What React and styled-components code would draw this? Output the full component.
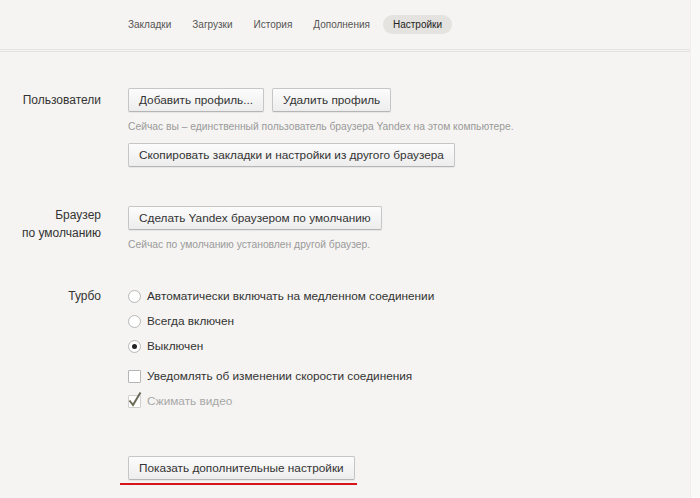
import styled, {createGlobalStyle} from "styled-components";

const GlobalStyle = createGlobalStyle`
    html, body {
        margin: 0;
        padding: 0;
        background: #f5f4f2;
    }
    body {
        font-family: "Liberation Sans", Arial, sans-serif;
        color: #333;
    }
`;

const Page = styled.div`
    display: flex;
    width: 700px;
    height: 498px;
    overflow: hidden;
`;

const Main = styled.div`
    width: 690px;
    display: flex;
    flex-direction: column;
`;

const Gutter = styled.div`
    flex: 1;
    background: #f9f9f8;
    border-left: 1px solid #efeeec;
`;

const Header = styled.nav`
    height: 49px;
    border-bottom: 3px double #e4e3e1;
    display: flex;
    align-items: center;
    padding-left: 120px;
`;

const Tab = styled.span`
    font-size: 10px;
    color: ${p => p.$active ? "#222" : "#555"};
    background: ${p => p.$active ? "#e4e3e0" : "transparent"};
    border-radius: 10px;
    padding: ${p => p.$active ? "4px 10px" : "4px 8px"};
    margin-right: ${p => p.$active ? 0 : "5px"};
`;

const Body = styled.div`
    padding-top: 36px;
    display: flex;
    flex-direction: column;
`;

const Section = styled.section`
    display: grid;
    grid-template-columns: 101px 1fr;
    column-gap: 27px;
    margin-bottom: ${p => p.$gap || 0}px;
`;

const Label = styled.div`
    text-align: right;
    font-size: 12px;
    line-height: 18px;
    color: #333;
    padding-top: ${p => p.$top || 0}px;
`;

const Content = styled.div`
    display: flex;
    flex-direction: column;
    align-items: flex-start;
`;

const ButtonRow = styled.div`
    display: flex;
    gap: 8px;
`;

const Button = styled.button`
    height: 24px;
    padding: 0 10px;
    font-family: "Liberation Sans", Arial, sans-serif;
    font-size: 11.8px;
    color: #333;
    background: linear-gradient(#fcfcfc, #ededed);
    border: 1px solid #c6c6c6;
    border-bottom-color: #b5b5b5;
    border-radius: 2px;
    box-shadow: 0 1px 1px rgba(0, 0, 0, 0.06);
    margin-top: ${p => p.$top || 0}px;
`;

const Hint = styled.div`
    font-size: 10.3px;
    color: #9a9a9a;
    margin-top: 8px;
    line-height: 13px;
`;

const Option = styled.label`
    display: flex;
    align-items: center;
    gap: 6px;
    height: 18px;
    font-size: 11.8px;
    color: ${p => p.$disabled ? "#a8a8a8" : "#333"};
    margin-top: ${p => p.$top || 0}px;
`;

const Radio = styled.span`
    width: 11px;
    height: 11px;
    border-radius: 50%;
    border: 1px solid #b9b9b9;
    background: radial-gradient(circle, #fff 60%, #f0f0f0);
    display: flex;
    align-items: center;
    justify-content: center;

    &::after {
        content: "";
        width: 5px;
        height: 5px;
        border-radius: 50%;
        background: ${p => p.$checked ? "#222" : "transparent"};
    }
`;

const Box = styled.span`
    position: relative;
    width: 11px;
    height: 11px;
    border: 1px solid ${p => p.$disabled ? "#cfcfcf" : "#b5b5b5"};
    border-radius: 1px;
    background: #fff;
`;

const Check = styled.svg`
    position: absolute;
    left: -1px;
    top: -5px;
`;

const Underlined = styled.div`
    display: flex;
    flex-direction: column;
    align-items: flex-start;
    margin-left: -8px;
    margin-top: 46px;
    padding: 0 2px 3px 8px;
    border-bottom: 2px solid #d8141b;
`;

export default function App() {
    const tabs = ["Закладки", "Загрузки", "История", "Дополнения", "Настройки"];

    return (
        <>
            <GlobalStyle/>
            <Page>
                <Main>
                    <Header>
                        {tabs.map(t => (
                            <Tab key={t} $active={t === "Настройки"}>{t}</Tab>
                        ))}
                    </Header>
                    <Body>
                        <Section $gap={39}>
                            <Label $top={3}>Пользователи</Label>
                            <Content>
                                <ButtonRow>
                                    <Button>Добавить профиль...</Button>
                                    <Button>Удалить профиль</Button>
                                </ButtonRow>
                                <Hint>Сейчас вы – единственный пользователь браузера Yandex на этом компьютере.</Hint>
                                <Button $top={10}>Скопировать закладки и настройки из другого браузера</Button>
                            </Content>
                        </Section>
                        <Section $gap={36}>
                            <Label>Браузер<br/>по умолчанию</Label>
                            <Content>
                                <Button>Сделать Yandex браузером по умолчанию</Button>
                                <Hint>Сейчас по умолчанию установлен другой браузер.</Hint>
                            </Content>
                        </Section>
                        <Section>
                            <Label>Турбо</Label>
                            <Content>
                                <Option><Radio/>Автоматически включать на медленном соединении</Option>
                                <Option $top={7}><Radio/>Всегда включен</Option>
                                <Option $top={7}><Radio $checked/>Выключен</Option>
                                <Option $top={12}><Box/>Уведомлять об изменении скорости соединения</Option>
                                <Option $top={7} $disabled>
                                    <Box $disabled>
                                        <Check width="14" height="16" viewBox="0 0 14 16">
                                            <path d="M1.5 9.5 L5 14 L12.5 1.5" fill="none" stroke="#6b6a55" strokeWidth="2"/>
                                        </Check>
                                    </Box>
                                    Сжимать видео
                                </Option>
                                <Underlined>
                                    <Button>Показать дополнительные настройки</Button>
                                </Underlined>
                            </Content>
                        </Section>
                    </Body>
                </Main>
                <Gutter/>
            </Page>
        </>
    );
}
